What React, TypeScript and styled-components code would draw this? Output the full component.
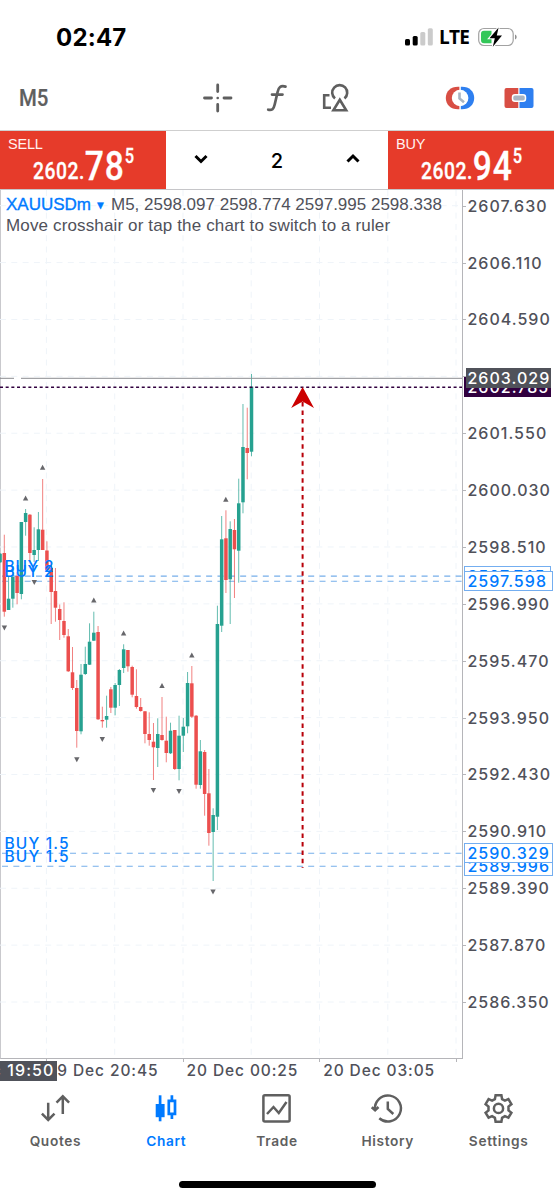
import React from "react";
import styled, { createGlobalStyle, css } from "styled-components";

const GlobalStyle = createGlobalStyle`
  * { box-sizing: border-box; }
  html, body { margin: 0; padding: 0; background: #fff; }
  body { font-family: Inter, "Liberation Sans", sans-serif; overflow: hidden; }
  svg { display: block; overflow: visible; }
`;

const INK = "#5f5f5f";
const AXIS_INK = "#50515a";
const BLUE = "#007aff";
const UP = "#26a190";
const DOWN = "#ec4f4e";

const Screen = styled.div`
  width: 554px;
  height: 1200px;
  display: flex;
  flex-direction: column;
  background: #fff;
  overflow: hidden;
`;

const StatusBar = styled.header`
  height: 75px;
  flex: none;
  display: flex;
  align-items: center;
  justify-content: space-between;
  padding: 0 37px 0 56px;
`;

const Clock = styled.time`
  font-size: 24px;
  font-weight: 700;
  letter-spacing: 0.2px;
  line-height: 30px;
  color: #000;
`;

const StatusIcons = styled.div`
  display: flex;
  align-items: center;
  height: 30px;
  margin-top: -2px;
`;

const Network = styled.span`
  width: 39px;
  font-family: "Open Sans", sans-serif;
  font-weight: 700;
  font-size: 19px;
  letter-spacing: -0.7px;
  line-height: 30px;
`;

const Toolbar = styled.nav`
  height: 55px;
  flex: none;
  display: flex;
  align-items: center;
  padding: 0 19px 10px;
`;

const Timeframe = styled.span`
  width: 181px;
  color: ${INK};
  font: 500 24px/30px Roboto, sans-serif;

  span {
    display: inline-block;
    transform: scaleX(0.85);
    transform-origin: left;
    -webkit-text-stroke: 0.2px ${INK};
  }
`;

const ToolIcon = styled.span<{ $width: number }>`
  width: ${(p) => p.$width}px;
  flex: none;
`;

const TradePanel = styled.section`
  height: 60px;
  flex: none;
  display: grid;
  grid-template-columns: 166px 222px 166px;
  border-top: 1px solid #cfcfcf;
  border-bottom: 1px solid #c6c6c9;
`;

const QuoteBox = styled.button`
  border: 0;
  background: #e63b2a;
  color: #fff;
  padding: 4px 8px 0;
  text-align: left;
  display: flex;
  flex-direction: column;
`;

const QuoteSide = styled.span`
  font: 400 14.5px/18px "Liberation Sans", sans-serif;
  letter-spacing: -0.2px;
  color: #fff1ef;
`;

const QuotePrice = styled.span`
  display: flex;
  align-items: flex-end;
  height: 35px;
  margin: -4px 0 0 25px;
  font-family: Roboto, sans-serif;
  font-weight: 500;
  -webkit-text-stroke: 0.3px #fff;
  transform: scaleX(0.84);
  transform-origin: left;
`;

const PricePart = styled.span<{ $size: number; $lift?: number; $track?: number }>`
  font-size: ${(p) => p.$size}px;
  line-height: 1;
  height: ${(p) => p.$size}px;
  letter-spacing: ${(p) => p.$track ?? 0}px;
  margin-bottom: ${(p) => p.$lift ?? 0}px;
`;

const Stepper = styled.div`
  display: flex;
  align-items: center;
  justify-content: space-between;
  padding: 0 27px 2px;
  font-size: 20px;
  font-weight: 500;

  span { padding-top: 3px; }
`;

const ChartRow = styled.main`
  height: 869px;
  flex: none;
  display: flex;
`;

const Plot = styled.div`
  position: relative;
  width: 463px;
  flex: none;
  border-left: 1px solid #c9c9cd;
  border-right: 1px solid #b5b5b9;
  border-bottom: 1px solid #b5b5b9;

  > svg { margin-left: -1px; }
`;

const Legend = styled.div`
  position: absolute;
  left: 5px;
  top: 5px;
  color: ${AXIS_INK};
  font: 400 17px/20.5px "Liberation Sans", sans-serif;
  white-space: nowrap;
`;

const LegendLine = styled.div<{ $track?: number }>`
  display: flex;
  height: 20.5px;
  letter-spacing: ${(p) => p.$track ?? 0}px;
`;

const SymbolName = styled.span`
  width: 105px;
  color: ${BLUE};
  -webkit-text-stroke: 0.35px ${BLUE};

  small { font-size: 11px; margin-left: 4px; vertical-align: 1px; }
`;

const PriceAxis = styled.div`
  position: relative;
  flex: 1;
  padding-top: 5.7px;
`;

const axisText = css`
  font-family: Inter, sans-serif;
  font-weight: 500;
  font-size: 16px;
  letter-spacing: 1.03px;
  white-space: nowrap;
`;

const AxisPrice = styled.div`
  ${axisText}
  height: 56.88px;
  padding-left: 4.4px;
  line-height: 20px;
  color: ${AXIS_INK};

  &::before {
    content: "";
    float: left;
    width: 3px;
    height: 1px;
    margin: 10px 0 0 -4.4px;
    background: #b5b5b9;
  }
`;

const PriceTag = styled.div<{ $top: number; $kind: "cursor" | "bid" | "order"; $w?: number }>`
  ${axisText}
  position: absolute;
  left: ${(p) => (p.$kind === "cursor" ? 3 : 1)}px;
  top: ${(p) => p.$top}px;
  width: ${(p) => p.$w ?? 87}px;
  height: 20px;
  line-height: 18px;
  padding-left: ${(p) => (p.$kind === "cursor" ? 0.4 : 2.4)}px;
  border: 1px solid;
  color: ${(p) => (p.$kind === "order" ? BLUE : "#fff")};
  background: ${(p) => ({ cursor: "#50525a", bid: "#31003f", order: "#fff" })[p.$kind]};
  border-color: ${(p) => ({ cursor: "#50525a", bid: "#31003f", order: "#74aef0" })[p.$kind]};
`;

const TimeAxis = styled.div`
  ${axisText}
  position: relative;
  flex: none;
  height: 24px;
  padding-left: 46px;
  display: grid;
  grid-template-columns: repeat(4, 136.6px);
  overflow: hidden;
  font-size: 15.5px;
  letter-spacing: 0.9px;
  line-height: 24px;
  color: ${AXIS_INK};
`;

const TimeLabel = styled.span`
  padding-left: 4px;

  &::before {
    content: "";
    float: left;
    width: 1px;
    height: 3px;
    margin-left: -4px;
    background: #b5b5b9;
  }
`;

const TimeTag = styled.span`
  position: absolute;
  left: 0;
  top: 2px;
  width: 57px;
  height: 20px;
  overflow: hidden;
  display: flex;
  justify-content: flex-end;
  padding-right: 2.5px;
  font-size: 16px;
  letter-spacing: 1.1px;
  line-height: 19px;
  background: #50525a;
  color: #fff;
`;

const TabBar = styled.nav`
  flex: none;
  height: 70px;
  padding-top: 10px;
  display: grid;
  grid-template-columns: repeat(5, 1fr);
`;

const Tab = styled.a<{ $active?: boolean }>`
  display: flex;
  flex-direction: column;
  align-items: center;
  gap: 9px;
  color: ${(p) => (p.$active ? BLUE : INK)};
  font-size: 13.7px;
  font-weight: 600;
  letter-spacing: 0.65px;
  line-height: 18px;
`;

const HomeIndicator = styled.div`
  flex: none;
  width: 197px;
  height: 7px;
  margin: 28px auto 0 179px;
  border-radius: 4px;
  background: #000;
`;

type Candle = [dir: 1 | 0, top: number, bottom: number, high: number, low: number];

/* Body top/bottom and wick high/low, starting with the partly hidden first bar. */
const candles: Candle[] = [
  [1, 553.7, 562.3, 553, 563], [0, 553, 611.7, 534.7, 616.7], [1, 598.7, 610, 577, 610], [1, 577, 598.7, 572, 607.7],
  [0, 576, 593, 572, 604.3], [1, 522, 594, 522, 599.3], [1, 513, 522, 509, 535.7], [0, 514.7, 553, 514, 562],
  [1, 550, 555, 527.3, 562], [1, 529.3, 550, 512, 561], [0, 529.7, 550, 479, 550], [0, 550.5, 570, 541.3, 571],
  [0, 568, 592, 562, 624], [0, 591, 607.7, 568, 621.7], [0, 609, 620, 604.5, 640], [0, 621, 635, 602.3, 637.7],
  [0, 636.3, 671.3, 629, 672], [0, 672.3, 688, 647, 690], [0, 688, 731, 680, 747.7], [1, 674.7, 731.3, 664, 734.3],
  [1, 664, 674, 646.7, 675], [1, 641.7, 664.7, 623.3, 665], [1, 632.7, 640.7, 611.7, 641], [0, 632, 719.3, 626, 720],
  [0, 720, 721.3, 706.7, 727.7], [1, 716, 719.7, 695.7, 727.7], [0, 689.3, 707.7, 687, 713], [1, 685, 707.7, 683, 715.3],
  [1, 670, 685, 669, 706], [1, 649.3, 668, 644.3, 673], [0, 650, 666.3, 650, 671.7], [0, 667, 694.7, 665.7, 697.3],
  [0, 696, 707, 669.3, 708.7], [0, 707, 711, 698, 711.7], [0, 711.3, 734, 711, 743.3], [0, 734, 740, 712.3, 745.7],
  [0, 741.7, 747.3, 723, 780], [1, 734, 748, 718.3, 767], [0, 735, 740, 697, 740.7], [0, 740.7, 753, 716.7, 762.3],
  [1, 730.7, 753.3, 722.7, 754], [0, 730, 769, 730, 770], [1, 735.7, 769, 715.7, 780.3], [1, 726.7, 735.7, 718, 752],
  [1, 683, 726.3, 672, 733.3], [0, 683.3, 716.7, 666, 718], [0, 715.7, 784.7, 715, 788.7], [1, 751.3, 785, 740, 788.7],
  [0, 752, 794, 750, 815.7], [0, 793.3, 833, 769, 845.7], [1, 815, 832, 808.3, 881], [1, 624, 816.7, 605.7, 830],
  [1, 539.3, 625.7, 516, 632], [0, 538.3, 580, 510.3, 593], [1, 529, 579.3, 521.3, 624], [0, 530, 549.3, 519, 598],
  [1, 503.3, 550.7, 478.7, 582.7], [1, 447, 502.3, 404, 513.3], [0, 448, 453, 407.7, 479.3], [1, 386.7, 451.7, 374, 456.3],
];

const peaks = [[25.6, 498], [42.6, 467.3], [93.8, 600], [123.6, 633], [162, 685.7], [191.8, 655], [225.8, 499.3]];
const troughs = [[4.4, 628], [34.3, 582.5], [76.8, 759.7], [102.3, 739.3], [153.4, 790.3], [179, 791.3], [213, 892]];
const gridX = [46.4, 114.7, 183, 251.2, 319.5, 387.8, 456];
const prices = ["2607.630", "2606.110", "2604.590", "", "2601.550", "2600.030", "2598.510", "2596.990", "2595.470", "2593.950", "2592.430", "2590.910", "2589.390", "2587.870", "2586.350"];

const Chart = () => (
  <svg width="462" height="868" viewBox="0 190 462 868" fill="none">
    {gridX.map((x) => (
      <path key={x} d={`M${x} 190V1058`} stroke="#eff4f9" strokeDasharray="6 5.3" />
    ))}
    {prices.map((_, i) => (
      <path key={i} d={`M0 ${205.7 + i * 56.88}H462`} stroke="#eff4f9" strokeDasharray="6 5.3" />
    ))}
    {[576.1, 581.2, 853.3, 866.2].map((y) => (
      <path key={y} d={`M0 ${y}H462`} stroke="#76aeea" strokeWidth="1.1" strokeDasharray="6 5.34" strokeDashoffset="-2" />
    ))}
    {candles.map(([up, top, bottom, high, low], i) => {
      const x = 0.05 + i * 4.262;
      const color = up ? UP : DOWN;
      return (
        <g key={i}>
          <path d={`M${x} ${high}V${low}`} stroke={color} strokeWidth="0.85" opacity="0.85" />
          <rect x={x - 1.75} y={top} width="3.5" height={bottom - top} fill={color} />
        </g>
      );
    })}
    {peaks.map(([x, y]) => (
      <path key={x} d={`M${x} ${y - 2.6}l2.700 5h-5.400z`} fill="#67676b" />
    ))}
    {troughs.map(([x, y]) => (
      <path key={x} d={`M${x} ${y + 2.6}l2.700-5h-5.400z`} fill="#67676b" />
    ))}
    <path d="M0 378.3H14M21 378.3H462" stroke="#8b8c90" />
    <path d="M0 387.3H462" stroke="#31003f" strokeWidth="1.4" strokeDasharray="3 2.67" />
    <path d="M302.6 402V868" stroke="#b80009" strokeWidth="2" strokeDasharray="4.5 3.96" />
    <path d="M302.6 387L314 408L302.6 401.5L291.2 408Z" fill="#cb0000" />
    <g fill={BLUE} fontFamily="Inter, sans-serif" fontSize="15.5" fontWeight="500">
      <text x="4.5" y="571.5" textLength="49">BUY 2</text>
      <text x="4.5" y="576.8" textLength="49">BUY 2</text>
      <text x="4.5" y="849" textLength="64">BUY 1.5</text>
      <text x="4.5" y="861.5" textLength="64">BUY 1.5</text>
    </g>
  </svg>
);

const SignalIcon = () => (
  <svg width="28" height="18" viewBox="0 0 28 18">
    <rect x="0" y="11" width="5" height="6.5" rx="1.5" />
    <rect x="7.7" y="8" width="5" height="9.5" rx="1.5" />
    <rect x="15.3" y="4" width="5" height="13.5" rx="1.5" fill="#cbcbcb" />
    <rect x="22.8" y="0.3" width="5" height="17.2" rx="1.5" fill="#cbcbcb" />
  </svg>
);

const BatteryIcon = () => (
  <svg width="39" height="22" viewBox="0 0 39 22">
    <rect x="0.7" y="2.5" width="34.5" height="17" rx="5.2" fill="#fff" stroke="#a2a2a2" strokeWidth="1.2" />
    <path d="M37 8.5c2.2.7 2.2 4.3 0 5z" fill="#8f8f8f" />
    <path d="M6 4.8H13.5V17.3H6a3 3 0 0 1-3-3V7.8a3 3 0 0 1 3-3z" fill="#33c759" />
    <path d="M20.6 1.6L11.5 12.200h5.300l-2 8.600L24 9.4h-5.200z" fill="#000" stroke="#fff" strokeWidth="2.2" paintOrder="stroke" />
  </svg>
);

const CrosshairIcon = () => (
  <svg width="36" height="32" viewBox="0 0 36 32" stroke={INK} strokeWidth="2.8" strokeLinecap="round">
    <path d="M17.7 3V9.5M17.7 22.5V29M4.5 16H11.5M24 16H31" />
    <circle cx="17.7" cy="16" r="1.3" fill={INK} stroke="none" />
  </svg>
);

const FunctionIcon = () => (
  <svg width="24" height="32" viewBox="0 0 24 32" fill="none" stroke={INK} strokeWidth="2.7" strokeLinecap="round">
    <path d="M20.5 4.6C15.5 3.2 13.6 5.4 12.6 10L9.7 22.5C8.7 27 7 28.7 3.2 27.7M7 12.6H17.5" />
  </svg>
);

const ShapesIcon = () => (
  <svg width="30" height="32" viewBox="0 0 30 32" fill="none" stroke={INK} strokeWidth="2.6">
    <path d="M8.5 13.2H3.2V25.7H10M14 16.5A7.5 7.5 0 1 1 23.5 16.4M18.8 17.7L25.2 28.2H12.4Z" />
  </svg>
);

const ClockIcon = () => (
  <svg width="30" height="26" viewBox="0 0 30 26" fill="none">
    <path d="M14.4 1.7H13C5.5 1.7 .8 6.5 .8 13S5.5 24.3 13 24.3H14.4Z" fill="#d84e44" />
    <path d="M15.8 1.7H17C24.5 1.7 29.2 6.5 29.2 13S24.5 24.3 17 24.3H15.8Z" fill="#2e7ff0" />
    <circle cx="15.1" cy="13" r="8.3" fill="#fff" />
    <path d="M14.5 7.6V13.5L19 17.3" stroke="#a9b5c3" strokeWidth="2.6" />
  </svg>
);

const PanelIcon = () => (
  <svg width="30" height="22" viewBox="0 0 30 22">
    <path d="M14.3 1V21H2.5A2 2 0 0 1 .5 19V3A2 2 0 0 1 2.5 1Z" fill="#d84e44" />
    <path d="M15.5 1H27.5A2 2 0 0 1 29.5 3V19A2 2 0 0 1 27.5 21H15.5Z" fill="#2e7ff0" />
    <rect x="8.500" y="7.700" width="13" height="6.600" rx="2.500" fill="#a9b5c3" stroke="#fff" strokeWidth="1.500" />
  </svg>
);

const Chevron = ({ up }: { up?: boolean }) => (
  <svg width="16" height="16" viewBox="0 0 16 16" fill="none" stroke="#000" strokeWidth="3">
    <path d={up ? "M2.5 10.5L8 5L13.5 10.5" : "M2.5 5L8 10.5L13.5 5"} />
  </svg>
);

const tabIcons: Record<string, React.ReactNode> = {
  Quotes: <path d="M8.2 9.7V26.5M1.9 20.7L8.2 27L14.5 20.7M22.8 21V3.5M16.5 9.6L22.8 3.3L29.1 9.6" />,
  Chart: (
    <>
      <path d="M9.1 2.3V28.3" strokeWidth="2.7" />
      <path d="M4.7 11H13.6V24.2H4.7Z" fill="currentColor" stroke="none" />
      <path d="M20.9 2.3V7M20.9 21V26M17.8 7.8H24V20.8H17.8Z" strokeWidth="2.7" />
    </>
  ),
  Trade: (
    <>
      <rect x="2.4" y="2.2" width="26.2" height="26.3" rx="1.5" />
      <path d="M6 21L12.5 14L17.8 20L25.5 9" />
    </>
  ),
  History: (
    <>
      <path d="M3 17A13 13 0 1 1 7.3 25.2M-0.3 14.3L3.1 17.3L6.5 14" />
      <path d="M15.8 8.5V16L21.3 21" />
    </>
  ),
  Settings: (
    <g transform="translate(0 .7)">
      <path d="M11.9 5.4L12.6 1.5H18.4L19.1 5.4L21.9 7L25.4 5.5L28.4 10.5L25.5 12.8V16.7L28.4 19L25.4 24L21.9 22.5L19.1 24.1L18.4 28H12.6L11.9 24.1L9.1 22.5L5.6 24L2.6 19L5.5 16.7V12.8L2.6 10.5L5.6 5.5L9.1 7Z" />
      <circle cx="15.5" cy="14.7" r="4.6" />
    </g>
  ),
};

const Quote = ({ side, whole, big, tail }: { side: string; whole: string; big: string; tail: string }) => (
  <QuoteBox>
    <QuoteSide>{side}</QuoteSide>
    <QuotePrice>
      <PricePart $size={23} $lift={1} $track={0.6}>{whole}</PricePart>
      <PricePart $size={40} $lift={-2.5} $track={1}>{big}</PricePart>
      <PricePart $size={19.5} $lift={18}>{tail}</PricePart>
    </QuotePrice>
  </QuoteBox>
);

export default function App() {
  return (
    <Screen>
      <GlobalStyle />
      <StatusBar>
        <Clock>02:47</Clock>
        <StatusIcons>
          <ToolIcon $width={34}><SignalIcon /></ToolIcon>
          <Network>LTE</Network>
          <BatteryIcon />
        </StatusIcons>
      </StatusBar>
      <Toolbar>
        <Timeframe><span>M5</span></Timeframe>
        <ToolIcon $width={65}><CrosshairIcon /></ToolIcon>
        <ToolIcon $width={56}><FunctionIcon /></ToolIcon>
        <ToolIcon $width={124}><ShapesIcon /></ToolIcon>
        <ToolIcon $width={58.5}><ClockIcon /></ToolIcon>
        <ToolIcon $width={30}><PanelIcon /></ToolIcon>
      </Toolbar>
      <TradePanel>
        <Quote side="SELL" whole="2602." big="78" tail="5" />
        <Stepper><Chevron /><span>2</span><Chevron up /></Stepper>
        <Quote side="BUY" whole="2602." big="94" tail="5" />
      </TradePanel>
      <ChartRow>
        <Plot>
          <Chart />
          <Legend>
            <LegendLine>
              <SymbolName>XAUUSDm<small>▼</small></SymbolName>
              <span>M5, 2598.097 2598.774 2597.995 2598.338</span>
            </LegendLine>
            <LegendLine $track={0.14}>Move crosshair or tap the chart to switch to a ruler</LegendLine>
          </Legend>
        </Plot>
        <PriceAxis>
          {prices.map((p, i) => <AxisPrice key={i}>{p}</AxisPrice>)}
          <PriceTag $kind="bid" $top={187}>2602.785</PriceTag>
          <PriceTag $kind="cursor" $top={178} $w={85}>2603.029</PriceTag>
          <PriceTag $kind="order" $top={376}>2597.745</PriceTag>
          <PriceTag $kind="order" $top={381} $w={89}>2597.598</PriceTag>
          <PriceTag $kind="order" $top={666} $w={89}>2589.996</PriceTag>
          <PriceTag $kind="order" $top={653} $w={89}>2590.329</PriceTag>
        </PriceAxis>
      </ChartRow>
      <TimeAxis>
        <TimeLabel>19 Dec 20:45</TimeLabel>
        <TimeLabel>20 Dec 00:25</TimeLabel>
        <TimeLabel>20 Dec 03:05</TimeLabel>
        <TimeLabel />
        <TimeTag>19 Dec 19:50</TimeTag>
      </TimeAxis>
      <TabBar>
        {Object.entries(tabIcons).map(([name, icon]) => (
          <Tab key={name} $active={name === "Chart"}>
            <svg width="31" height="30" viewBox="0 0 31 30" fill="none" stroke="currentColor" strokeWidth="2.5">{icon}</svg>
            {name}
          </Tab>
        ))}
      </TabBar>
      <HomeIndicator />
    </Screen>
  );
}
